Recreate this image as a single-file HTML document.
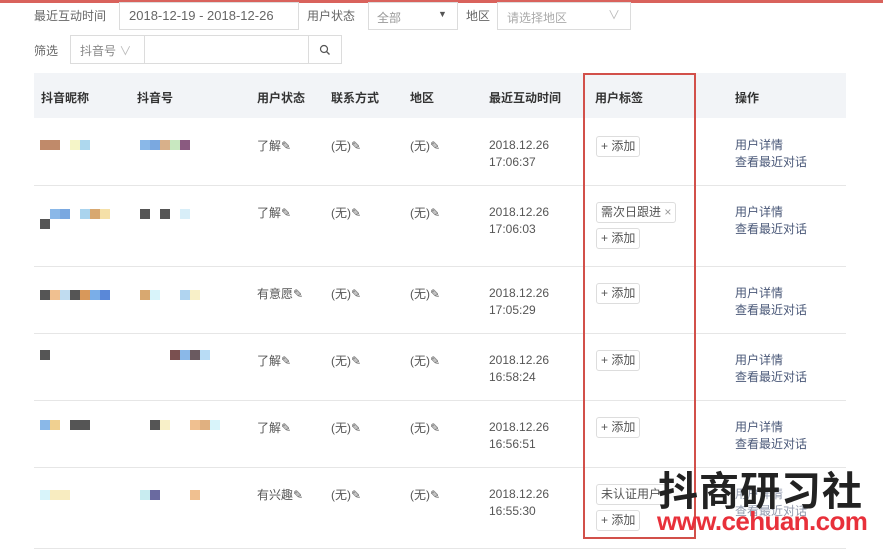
<!DOCTYPE html>
<html><head><meta charset="utf-8"><style>
*{margin:0;padding:0;box-sizing:border-box}
body{width:883px;height:550px;overflow:hidden;background:#fff;position:relative;font-family:"Liberation Sans","Noto Sans CJK SC",sans-serif;font-size:12px;color:#555}
.a{position:absolute;white-space:nowrap}
.b{position:absolute;width:10px;height:10px}
.inp{position:absolute;border:1px solid #dcdcdc;background:#fff}
.hd{color:#333;font-weight:600}
.line{position:absolute;left:34px;width:812px;height:1px;background:#e6e6e6}
.tag{position:absolute;border:1px solid #ddd;border-radius:3px;padding:0 4px;height:21px;line-height:19px;font-size:12px;color:#555;background:#fff}
.op{color:#4a5878}
</style></head><body>
<div style="position:absolute;left:0;top:0;width:883px;height:3px;background:#d9625c"></div>
<div class="a" style="left:34px;top:7px;color:#666">最近互动时间</div>
<div class="inp" style="left:119px;top:2px;width:180px;height:28px"></div>
<div class="a" style="left:129px;top:8px;font-size:13px;color:#666">2018-12-19 - 2018-12-26</div>
<div class="a" style="left:307px;top:7px;color:#666">用户状态</div>
<div class="inp" style="left:368px;top:2px;width:90px;height:28px"></div>
<div class="a" style="left:377px;top:9px;color:#999">全部</div>
<div class="a" style="left:438px;top:9px;font-size:9px;color:#555">▼</div>
<div class="a" style="left:466px;top:7px;color:#666">地区</div>
<div class="inp" style="left:497px;top:2px;width:134px;height:28px"></div>
<div class="a" style="left:507px;top:9px;color:#aaa">请选择地区</div>
<div class="a" style="left:608px;top:6px;color:#bbb">∨</div>
<div class="a" style="left:34px;top:42px;color:#666">筛选</div>
<div class="inp" style="left:70px;top:35px;width:272px;height:29px"></div>
<div style="position:absolute;left:144px;top:36px;width:1px;height:27px;background:#dcdcdc"></div>
<div style="position:absolute;left:308px;top:36px;width:1px;height:27px;background:#dcdcdc"></div>
<div class="a" style="left:80px;top:42px;color:#888">抖音号 <span style="color:#bbb">∨</span></div>
<svg class="a" style="left:319px;top:44px" width="12" height="12" viewBox="0 0 12 12"><circle cx="5" cy="5" r="3.5" fill="none" stroke="#555" stroke-width="1.2"/><path d="M7.5 7.5L10.5 10.5" stroke="#555" stroke-width="1.3"/></svg>
<div style="position:absolute;left:34px;top:73px;width:812px;height:45px;background:#f2f4f7"></div>
<div class="a hd" style="left:41px;top:89px">抖音昵称</div>
<div class="a hd" style="left:137px;top:89px">抖音号</div>
<div class="a hd" style="left:257px;top:89px">用户状态</div>
<div class="a hd" style="left:331px;top:89px">联系方式</div>
<div class="a hd" style="left:410px;top:89px">地区</div>
<div class="a hd" style="left:489px;top:89px">最近互动时间</div>
<div class="a hd" style="left:595px;top:89px">用户标签</div>
<div class="a hd" style="left:735px;top:89px">操作</div>

<div class="line" style="top:185px"></div><div class="line" style="top:266px"></div><div class="line" style="top:333px"></div><div class="line" style="top:400px"></div><div class="line" style="top:467px"></div><div class="line" style="top:548px"></div>

<div class="a" style="left:257px;top:137px">了解✎</div><div class="a" style="left:331px;top:137px">(无)✎</div><div class="a" style="left:410px;top:137px">(无)✎</div>
<div class="a" style="left:489px;top:137px;line-height:17px">2018.12.26<br>17:06:37</div>
<div class="tag" style="left:596px;top:136px">+ 添加</div>
<div class="a op" style="left:735px;top:137px;line-height:17px">用户详情<br>查看最近对话</div>

<div class="a" style="left:257px;top:204px">了解✎</div><div class="a" style="left:331px;top:204px">(无)✎</div><div class="a" style="left:410px;top:204px">(无)✎</div>
<div class="a" style="left:489px;top:204px;line-height:17px">2018.12.26<br>17:06:03</div>
<div class="tag" style="left:596px;top:202px">需次日跟进 <span style="color:#999">×</span></div>
<div class="tag" style="left:596px;top:228px">+ 添加</div>
<div class="a op" style="left:735px;top:204px;line-height:17px">用户详情<br>查看最近对话</div>

<div class="a" style="left:257px;top:285px">有意愿✎</div><div class="a" style="left:331px;top:285px">(无)✎</div><div class="a" style="left:410px;top:285px">(无)✎</div>
<div class="a" style="left:489px;top:285px;line-height:17px">2018.12.26<br>17:05:29</div>
<div class="tag" style="left:596px;top:283px">+ 添加</div>
<div class="a op" style="left:735px;top:285px;line-height:17px">用户详情<br>查看最近对话</div>

<div class="a" style="left:257px;top:352px">了解✎</div><div class="a" style="left:331px;top:352px">(无)✎</div><div class="a" style="left:410px;top:352px">(无)✎</div>
<div class="a" style="left:489px;top:352px;line-height:17px">2018.12.26<br>16:58:24</div>
<div class="tag" style="left:596px;top:350px">+ 添加</div>
<div class="a op" style="left:735px;top:352px;line-height:17px">用户详情<br>查看最近对话</div>

<div class="a" style="left:257px;top:419px">了解✎</div><div class="a" style="left:331px;top:419px">(无)✎</div><div class="a" style="left:410px;top:419px">(无)✎</div>
<div class="a" style="left:489px;top:419px;line-height:17px">2018.12.26<br>16:56:51</div>
<div class="tag" style="left:596px;top:417px">+ 添加</div>
<div class="a op" style="left:735px;top:419px;line-height:17px">用户详情<br>查看最近对话</div>

<div class="a" style="left:257px;top:486px">有兴趣✎</div><div class="a" style="left:331px;top:486px">(无)✎</div><div class="a" style="left:410px;top:486px">(无)✎</div>
<div class="a" style="left:489px;top:486px;line-height:17px">2018.12.26<br>16:55:30</div>
<div class="tag" style="left:596px;top:484px">未认证用户</div>
<div class="tag" style="left:596px;top:510px">+ 添加</div>
<div class="a op" style="left:735px;top:486px;line-height:17px;opacity:.6">用户详情<br>查看最近对话</div>

<div class="b" style="left:40px;top:140px;width:20px;background:#c08a6a"></div><div class="b" style="left:70px;top:140px;background:#f5f5c8"></div><div class="b" style="left:80px;top:140px;background:#aed8ee"></div>
<div class="b" style="left:140px;top:140px;background:#8ab8e8"></div><div class="b" style="left:150px;top:140px;background:#7aa8e0"></div><div class="b" style="left:160px;top:140px;background:#d8b08a"></div><div class="b" style="left:170px;top:140px;background:#c8e8c0"></div><div class="b" style="left:180px;top:140px;background:#8a5a80"></div>

<div class="b" style="left:50px;top:209px;background:#8ab8e8"></div><div class="b" style="left:60px;top:209px;background:#7aa8e0"></div><div class="b" style="left:80px;top:209px;background:#aad4ee"></div><div class="b" style="left:90px;top:209px;background:#d8a870"></div><div class="b" style="left:100px;top:209px;background:#f5e0a8"></div><div class="b" style="left:40px;top:219px;background:#555"></div>
<div class="b" style="left:140px;top:209px;background:#555"></div><div class="b" style="left:160px;top:209px;background:#555"></div><div class="b" style="left:180px;top:209px;background:#d8eef8"></div>

<div class="b" style="left:40px;top:290px;background:#555"></div><div class="b" style="left:50px;top:290px;background:#f0c090"></div><div class="b" style="left:60px;top:290px;background:#c0dcf0"></div><div class="b" style="left:70px;top:290px;background:#555"></div><div class="b" style="left:80px;top:290px;background:#d8985a"></div><div class="b" style="left:90px;top:290px;background:#7aaee8"></div><div class="b" style="left:100px;top:290px;background:#5a88d8"></div>
<div class="b" style="left:140px;top:290px;background:#d8a870"></div><div class="b" style="left:150px;top:290px;background:#d8f4fa"></div><div class="b" style="left:180px;top:290px;background:#b0d4f0"></div><div class="b" style="left:190px;top:290px;background:#f8f0c8"></div>

<div class="b" style="left:40px;top:350px;background:#555"></div><div class="b" style="left:170px;top:350px;background:#7a5050"></div><div class="b" style="left:180px;top:350px;background:#8ab8e8"></div><div class="b" style="left:190px;top:350px;background:#6a5a60"></div><div class="b" style="left:200px;top:350px;background:#b8dcf5"></div>

<div class="b" style="left:40px;top:420px;background:#8ab8e8"></div><div class="b" style="left:50px;top:420px;background:#f0d090"></div><div class="b" style="left:70px;top:420px;width:20px;background:#555"></div>
<div class="b" style="left:150px;top:420px;background:#555"></div><div class="b" style="left:160px;top:420px;background:#f8f0c8"></div><div class="b" style="left:190px;top:420px;background:#f0c090"></div><div class="b" style="left:200px;top:420px;background:#e0b080"></div><div class="b" style="left:210px;top:420px;background:#d8f4fa"></div>

<div class="b" style="left:40px;top:490px;background:#d8f4fa"></div><div class="b" style="left:50px;top:490px;width:20px;background:#f8ecc0"></div>
<div class="b" style="left:140px;top:490px;background:#c8ecf0"></div><div class="b" style="left:150px;top:490px;background:#6a6aa0"></div><div class="b" style="left:190px;top:490px;background:#f0c090"></div>

<div style="position:absolute;left:583px;top:73px;width:113px;height:466px;border:2px solid #d2504a"></div>

<div class="a" style="left:658px;top:465px;font-size:40px;font-weight:bold;color:#222;letter-spacing:1px;font-family:'Noto Sans CJK SC',sans-serif;line-height:46px">抖商研习社</div>
<div class="a" style="left:657px;top:507px;font-size:26px;font-weight:bold;color:#e8303a;line-height:28px;letter-spacing:-0.6px">www.cehuan.com</div>
</body></html>
